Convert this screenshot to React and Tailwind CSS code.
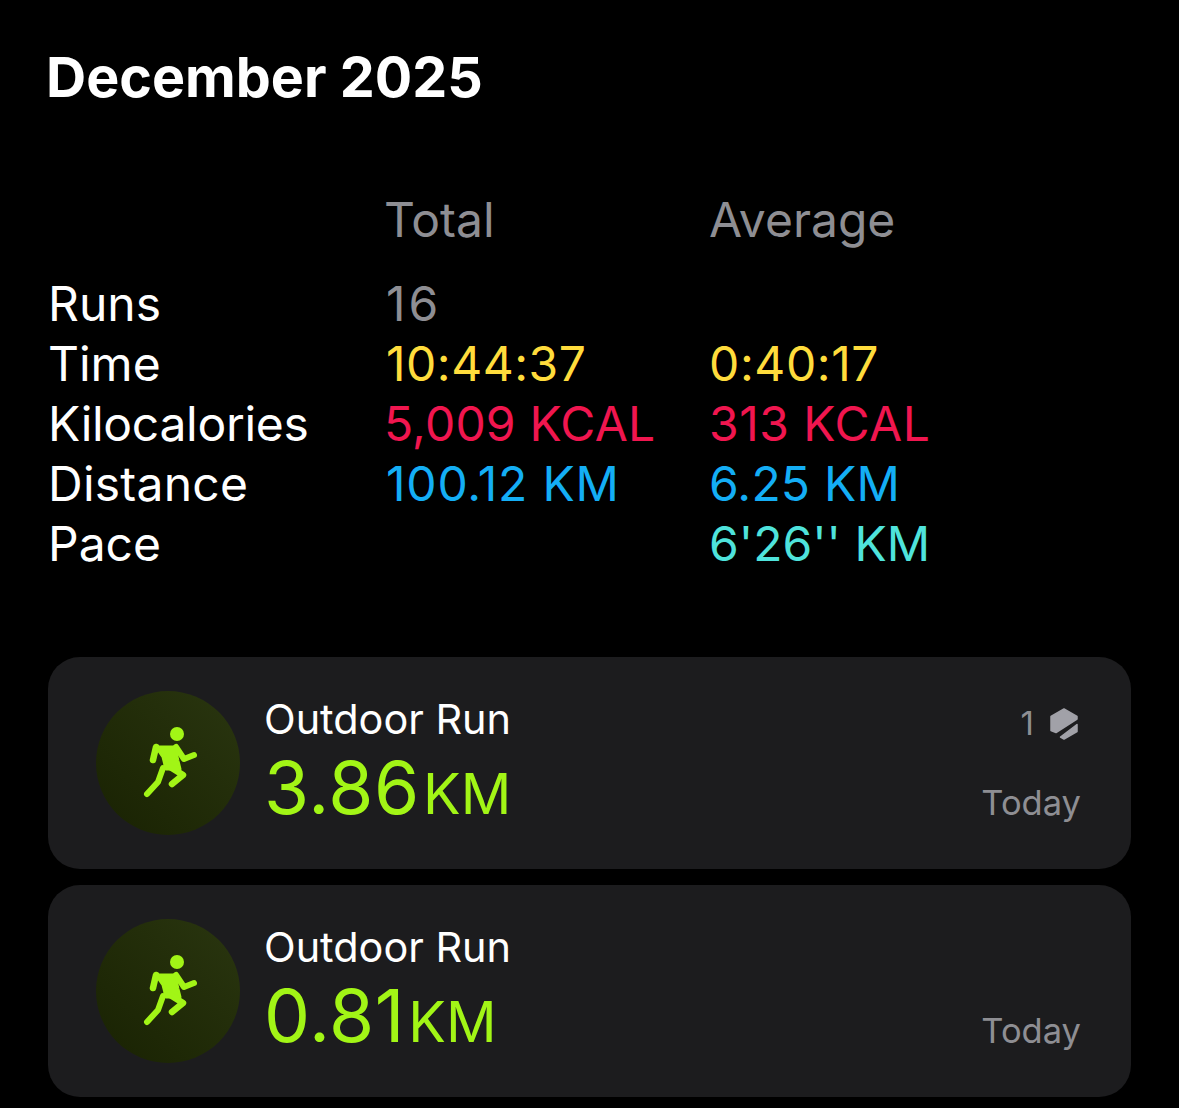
import React from 'react';

const sans = { fontFamily: 'Inter, sans-serif' };

const rows = [
  { label: 'Runs', total: '16', average: '', totalColor: 'pl-[2px] text-[#8e8e93] tracking-[3px]', averageColor: '' },
  { label: 'Time', total: '10:44:37', average: '0:40:17', totalColor: 'pl-[2px] text-[#ffdc3c] tracking-[0.5px]', averageColor: 'text-[#ffdc3c] tracking-[0.6px]' },
  { label: 'Kilocalories', labelClass: 'tracking-[-0.3px]', total: '5,009 KCAL', average: '313 KCAL', totalColor: 'text-[#f0164f] tracking-[0.2px]', averageColor: 'text-[#f0164f] tracking-[0.5px]' },
  { label: 'Distance', labelClass: 'tracking-[0.25px]', total: '100.12 KM', average: '6.25 KM', totalColor: 'pl-[2px] text-[#14aef5] tracking-[0.8px]', averageColor: 'text-[#14aef5] tracking-[0.2px]' },
  { label: 'Pace', total: '', average: "6'26'' KM", totalColor: '', averageColor: 'text-[#4fe3dc]' },
];

function RunnerIcon() {
  return (
    <svg width="144" height="144" viewBox="0 0 144 144" fill="none" stroke="#a2f516" strokeLinecap="round" strokeLinejoin="round">
      <circle cx="81" cy="43" r="7" fill="#a2f516" stroke="none" />
      <path d="M60 56 L79 56 L82 70 L84 78 L70 78 L67 66 Z" fill="#a2f516" strokeWidth="3" />
      <path d="M60 56 L57 69" strokeWidth="6.5" />
      <path d="M80 56 L88 68 L98 64" strokeWidth="6" />
      <path d="M67 77 L62 91 L51 103" strokeWidth="6" />
      <path d="M71 74 L87 84 L76 93" strokeWidth="6.5" />
    </svg>
  );
}

function HexBadge() {
  return (
    <svg width="28" height="32" viewBox="0 0 28 32" className="ml-[16px] mr-[3px]">
      <path d="M14 1 L27 8.5 L27 11 L6 24.5 L1 22.5 L1 8.5 Z" fill="#a1a1a8" stroke="#a1a1a8" strokeWidth="1.5" strokeLinejoin="round" />
      <path d="M27 16.5 L27 23.5 L14 31 L10.5 29 Z" fill="#a1a1a8" stroke="#a1a1a8" strokeWidth="1.5" strokeLinejoin="round" />
    </svg>
  );
}

function RunCard({ distance, badge }) {
  return (
    <div className="flex h-[212px] rounded-[32px] bg-[#1c1c1e] pl-[48px] pr-[50px] pt-[34px]">
      <div className="h-[144px] w-[144px] shrink-0 rounded-full bg-gradient-to-tr from-[#192203] to-[#2a3610]">
        <RunnerIcon />
      </div>
      <div className="ml-[24px] flex-1">
        <div className="text-[41.4px] leading-[56px] text-white">Outdoor Run</div>
        <div className="mt-[-1px] flex items-baseline text-[#a2f516]">
          <span className="text-[73px] leading-[84px] tracking-[0.7px]">{distance}</span>
          <span className="ml-[3px] text-[56px] leading-[84px]">KM</span>
        </div>
      </div>
      <div className="flex flex-col items-end">
        <div className="mt-[8px] flex h-[50px] items-center text-[33px] text-[#8e8e93]">
          {badge && (
            <>
              <span>{badge}</span>
              <HexBadge />
            </>
          )}
        </div>
        <div className="mt-[29px] text-[34.5px] leading-[50px] text-[#8e8e93]">Today</div>
      </div>
    </div>
  );
}

export default function App() {
  return (
    <div className="h-[1108px] w-full overflow-hidden bg-black px-[48px] pt-[43px]" style={sans}>
      <h1 className="ml-[-2px] text-[55.6px] font-bold leading-[68px] text-white">December 2025</h1>

      <div className="mt-[79px] grid grid-cols-[336px_325px_1fr] text-[48px] leading-[60px]">
        <div />
        <div className="text-[#8e8e93]">Total</div>
        <div className="text-[#8e8e93]">Average</div>
      </div>
      <div className="mt-[24px] grid grid-cols-[336px_325px_1fr] text-[48px] leading-[60px]">
        {rows.map((row) => (
          <React.Fragment key={row.label}>
            <div className={`text-white ${row.labelClass || ''}`}>{row.label}</div>
            <div className={row.totalColor}>{row.total}</div>
            <div className={row.averageColor}>{row.average}</div>
          </React.Fragment>
        ))}
      </div>

      <div className="mt-[83px] flex flex-col gap-[16px]">
        <RunCard distance="3.86" badge="1" />
        <RunCard distance="0.81" />
      </div>
    </div>
  );
}
